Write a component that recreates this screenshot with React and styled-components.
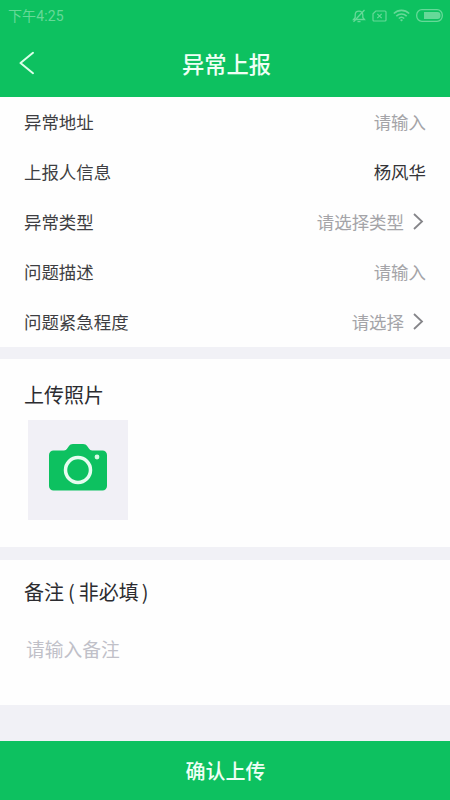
import styled, { createGlobalStyle } from 'styled-components';

const rows = [
  { label: '异常地址', value: '请输入' },
  { label: '上报人信息', value: '杨风华', filled: true },
  { label: '异常类型', value: '请选择类型', select: true },
  { label: '问题描述', value: '请输入' },
  { label: '问题紧急程度', value: '请选择', select: true },
];

const BellOffIcon = () => (
  <svg width="14" height="14" viewBox="0 0 14 14" fill="none" stroke="currentColor" strokeWidth="1.3">
    <path d="M1.500 10.500h11L10.800 8.400V6C10.800 3.800 9.300 2.200 7 2.200S3.200 3.800 3.200 6v2.400L1.500 10.500z" />
    <path d="M5.500 12.600h3M12.500 1L1.500 12.800" />
  </svg>
);

const NoSimIcon = () => (
  <svg width="15" height="12" viewBox="0 0 15 12" fill="none" stroke="currentColor" strokeWidth="1.2">
    <path d="M3.800 1H13a1 1 0 0 1 1 1v8a1 1 0 0 1-1 1H2a1 1 0 0 1-1-1V3.800z" />
    <path d="M5.300 3.900l4.400 4.200M9.700 3.900L5.300 8.100" />
  </svg>
);

const WifiIcon = () => (
  <svg width="17" height="13" viewBox="0 0 17 13" fill="none" stroke="currentColor" strokeWidth="1.6">
    <path d="M.8 4.500C5.200.3 11.800.3 16.200 4.500M3.300 7.100c3-2.800 7.400-2.800 10.400 0M5.800 9.500c1.600-1.500 3.800-1.500 5.400 0" />
    <path d="M7 10.900c.9-.8 2.100-.8 3 0l-1.500 1.600z" fill="currentColor" stroke="none" />
  </svg>
);

const BatteryIcon = () => (
  <svg width="27" height="13" viewBox="0 0 27 13" fill="none">
    <rect x=".7" y=".7" width="25.600" height="11.600" rx="5.200" stroke="currentColor" strokeWidth="1.300" />
    <path d="M8 3h13.500a3 3 0 0 1 3 3v1a3 3 0 0 1-3 3H8z" fill="currentColor" />
  </svg>
);

const BackIcon = () => (
  <svg width="16" height="24" viewBox="0 0 16 24" fill="none" stroke="#dcffe9" strokeWidth="2">
    <path d="M14 1.800L1.500 12 14 22.200" strokeLinecap="round" strokeLinejoin="round" />
  </svg>
);

const ArrowIcon = () => (
  <svg width="11" height="18" viewBox="0 0 11 18" fill="none" stroke="#858589" strokeWidth="1.800">
    <path d="M1 1L9 8.500 1 16" />
  </svg>
);

const CameraIcon = () => (
  <svg width="58" height="47" viewBox="0 0 58 47">
    <path
      d="M4.500 6.500H15c1.500 0 2.300-.6 3.200-1.900l1.600-2.300C20.900.7 22 0 24 0h10c2 0 3.200.7 4.300 2.300l1.600 2.300c.9 1.300 1.700 1.900 3.200 1.900h10.400A4.500 4.500 0 0 1 58 11v31a4.500 4.500 0 0 1-4.500 4.500h-49A4.500 4.500 0 0 1 0 42V11a4.500 4.500 0 0 1 4.500-4.500z"
      fill="#0dc160"
    />
    <circle cx="29" cy="26" r="12.500" fill="none" stroke="#e6fcf0" strokeWidth="3.500" />
    <circle cx="48" cy="13" r="2.400" fill="#d5fae4" />
  </svg>
);

const App = () => {
  return (
    <Page>
      <GlobalStyle />
      <Header>
        <StatusBar>
          <Time>下午4:25</Time>
          <StatusIcons>
            <BellOffIcon />
            <NoSimIcon />
            <WifiIcon />
            <BatteryIcon />
          </StatusIcons>
        </StatusBar>
        <NavBar>
          <BackButton aria-label="返回">
            <BackIcon />
          </BackButton>
          <NavTitle>异常上报</NavTitle>
        </NavBar>
      </Header>

      <FormSection>
        {rows.map((row) => (
          <Row key={row.label}>
            <Label>{row.label}</Label>
            <Value $filled={row.filled}>
              {row.value}
              {row.select && (
                <Arrow>
                  <ArrowIcon />
                </Arrow>
              )}
            </Value>
          </Row>
        ))}
      </FormSection>

      <PhotoSection>
        <SectionTitle>上传照片</SectionTitle>
        <UploadBox aria-label="上传照片">
          <CameraIcon />
        </UploadBox>
      </PhotoSection>

      <RemarkSection>
        <SectionTitle>
          备注<OpenBracket>(</OpenBracket>非必填<CloseBracket>)</CloseBracket>
        </SectionTitle>
        <Remark>请输入备注</Remark>
      </RemarkSection>

      <SubmitButton>确认上传</SubmitButton>
    </Page>
  );
};

export default App;

const GlobalStyle = createGlobalStyle`
  * {
    box-sizing: border-box;
  }

  body {
    margin: 0;
    font-family: 'Noto Sans CJK SC', sans-serif;
  }

  button {
    border: none;
    padding: 0;
    font-family: inherit;
  }

  svg {
    display: block;
  }
`;

const Page = styled.div`
  display: flex;
  flex-direction: column;
  width: 450px;
  height: 800px;
  overflow: hidden;
  background-color: #f1f1f6;
`;

const Header = styled.header`
  height: 97px;
  background-color: #0dc160;
`;

const StatusBar = styled.div`
  display: flex;
  align-items: center;
  justify-content: space-between;
  height: 31px;
  padding: 0 7px 0 8px;
  color: #66d998;
`;

const Time = styled.span`
  font-family: Roboto, 'Noto Sans CJK SC', sans-serif;
  font-size: 14px;
  line-height: 30px;
  letter-spacing: 0.1px;
`;

const StatusIcons = styled.div`
  display: flex;
  align-items: center;
  gap: 6px;
`;

const NavBar = styled.div`
  display: grid;
  grid-template-columns: 60px 1fr 57px;
  align-items: center;
  height: 63px;
`;

const BackButton = styled.button`
  padding-left: 19px;
  background: none;
`;

const NavTitle = styled.h1`
  margin: 0;
  color: #effff5;
  font-size: 22.3px;
  font-weight: 500;
  line-height: 32px;
  text-align: center;
`;

const Section = styled.section`
  background-color: #fefefe;
`;

const FormSection = styled(Section)`
  height: 250px;
`;

const Row = styled.div`
  display: flex;
  align-items: center;
  justify-content: space-between;
  height: 50px;
  padding: 0 24px;
  font-size: 17.45px;
  line-height: 26px;
`;

const Label = styled.span`
  color: #3e3e42;
`;

const Value = styled.span`
  display: flex;
  align-items: center;
  color: ${({ $filled }) => ($filled ? '#343438' : '#a4a4a8')};
`;

const Arrow = styled.span`
  padding: 0 2px 0 9px;
`;

const PhotoSection = styled(Section)`
  height: 188px;
  margin-top: 12px;
  padding: 21px 24px 0;
`;

const SectionTitle = styled.h2`
  margin: 0;
  color: #2c2c30;
  font-size: 20px;
  font-weight: 400;
  line-height: 30px;
`;

const UploadBox = styled.button`
  display: flex;
  align-items: center;
  justify-content: center;
  width: 100px;
  height: 100px;
  margin: 10px 0 0 4px;
  padding-bottom: 5px;
  background-color: #f1f0f6;
`;

const RemarkSection = styled(Section)`
  height: 145px;
  margin-top: 13px;
  padding: 17px 24px 0;
`;

const OpenBracket = styled.span`
  margin: 0 4px;
`;

const CloseBracket = styled.span`
  margin-left: 3px;
`;

const Remark = styled.p`
  margin: 28px 0 0 2px;
  color: #c0c0c8;
  font-size: 18.75px;
  line-height: 28px;
`;

const SubmitButton = styled.button`
  height: 59px;
  margin-top: auto;
  padding-left: 1px;
  background-color: #0dc160;
  color: #effff5;
  font-size: 20px;
  font-weight: 500;
`;
